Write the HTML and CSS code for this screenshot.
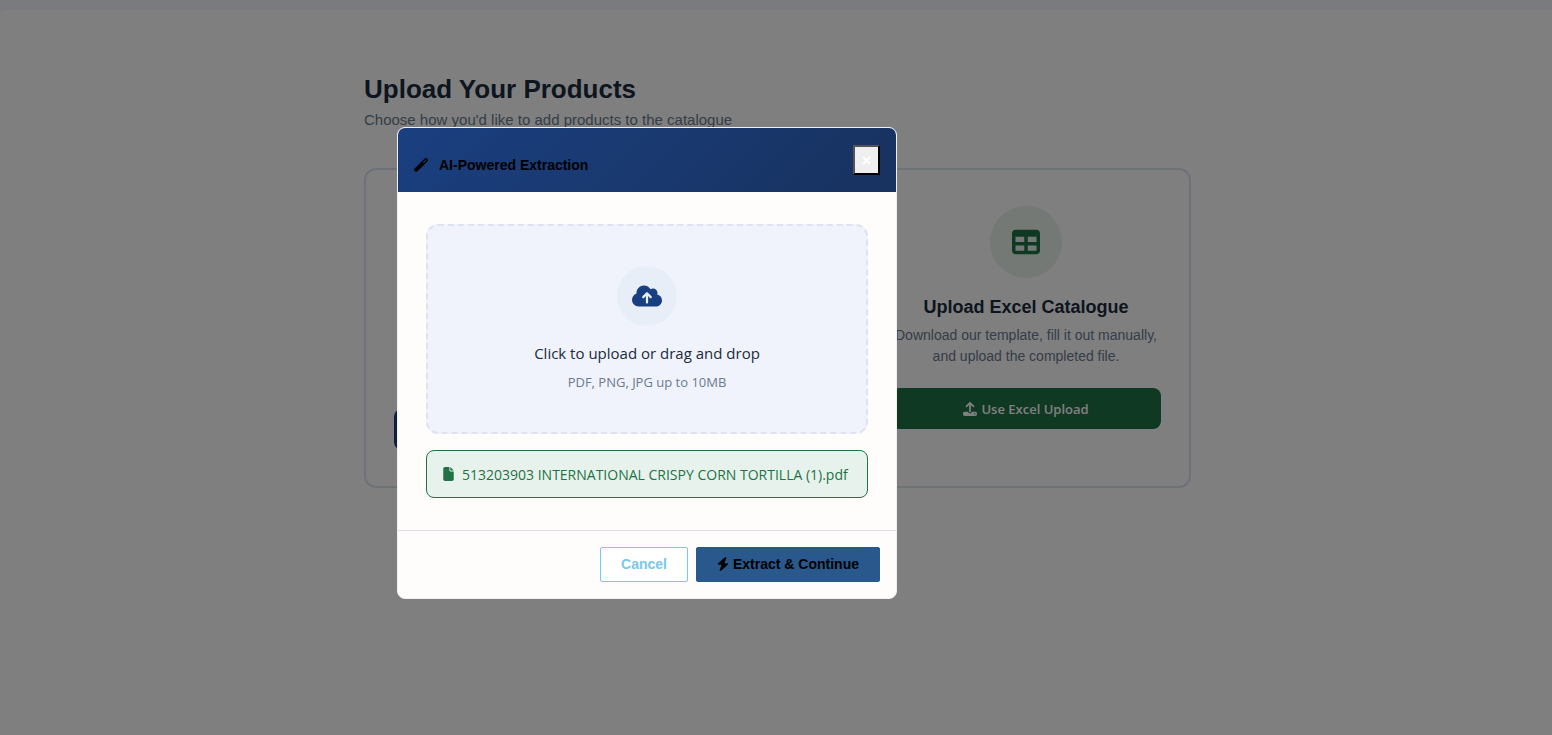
FILE: index.html
```html
<!DOCTYPE html>
<html lang="en">
<head>
  <meta charset="UTF-8">
  <meta name="viewport" content="width=device-width, initial-scale=1.0">
  <title>Upload Your Products</title>
  <link rel="stylesheet" href="styles.css">
</head>
<body>

<main class="page">
  <div class="container">
    <h1 class="page-title">Upload Your Products</h1>
    <p class="page-subtitle">Choose how you'd like to add products to the catalogue</p>

    <div class="cards">
      <section class="card">
        <div class="card-icon card-icon-blue">
          <svg width="28" height="28" viewBox="0 0 512 512" fill="currentColor"><path d="M14.1 463.3c-18.7-18.7-18.7-49.1 0-67.9L395.4 14.1c18.7-18.7 49.1-18.7 67.9 0l34.6 34.6c18.7 18.7 18.7 49.1 0 67.9L116.5 497.9c-18.7 18.7-49.1 18.7-67.9 0L14.1 463.3zM347.6 187.6l105-105L429.4 59.3l-105 105 23.3 23.3z"/></svg>
        </div>
        <button type="button" class="card-btn card-btn-blue" aria-label="AI-Powered Extraction"></button>
      </section>

      <section class="card">
        <div class="card-icon card-icon-green">
          <svg width="28" height="28" viewBox="0 0 512 512" fill="currentColor"><path d="M64 256V160H224v96H64zm0 64H224v96H64V320zm224 96V320H448v96H288zM448 256H288V160H448v96zM64 32C28.7 32 0 60.7 0 96V416c0 35.3 28.7 64 64 64H448c35.3 0 64-28.7 64-64V96c0-35.3-28.7-64-64-64H64z"/></svg>
        </div>
        <h2 class="card-title">Upload Excel Catalogue</h2>
        <p class="card-text">Download our template, fill it out manually, and upload the completed file.</p>
        <button type="button" class="card-btn card-btn-green">
          <svg width="14" height="14" viewBox="0 0 512 512" fill="currentColor"><path d="M288 109.3V352c0 17.7-14.3 32-32 32s-32-14.3-32-32V109.3l-73.4 73.4c-12.5 12.5-32.8 12.5-45.3 0s-12.5-32.8 0-45.3l128-128c12.5-12.5 32.8-12.5 45.3 0l128 128c12.5 12.5 12.5 32.8 0 45.3s-32.8 12.5-45.3 0L288 109.3zM64 352H192c0 35.3 28.7 64 64 64s64-28.7 64-64H448c35.3 0 64 28.7 64 64v32c0 35.3-28.7 64-64 64H64c-35.3 0-64-28.7-64-64V416c0-35.3 28.7-64 64-64zM432 456a24 24 0 1 0 0-48 24 24 0 1 0 0 48z"/></svg>
          Use Excel Upload
        </button>
      </section>
    </div>
  </div>
</main>

<div class="overlay">
  <div class="modal" role="dialog" aria-labelledby="modal-title">
    <div class="modal-header">
      <h5 class="modal-title" id="modal-title">
        <svg width="14" height="14" viewBox="0 0 512 512" fill="currentColor"><path d="M14.1 463.3c-18.7-18.7-18.7-49.1 0-67.9L395.4 14.1c18.7-18.7 49.1-18.7 67.9 0l34.6 34.6c18.7 18.7 18.7 49.1 0 67.9L116.5 497.9c-18.7 18.7-49.1 18.7-67.9 0L14.1 463.3zM347.6 187.6l105-105L429.4 59.3l-105 105 23.3 23.3z"/></svg>
        AI-Powered Extraction
      </h5>
      <button type="button" class="modal-close">×</button>
    </div>

    <div class="modal-body">
      <button type="button" class="dropzone">
        <span class="dropzone-icon">
          <svg width="30" height="24" viewBox="0 0 640 512" fill="currentColor"><path d="M144 480C64.5 480 0 415.5 0 336c0-62.8 40.2-116.2 96.2-135.9c-.1-2.7-.2-5.4-.2-8.1c0-88.4 71.6-160 160-160c59.3 0 111 32.2 138.7 80.2C409.9 102 428.3 96 448 96c53 0 96 43 96 96c0 12.2-2.3 23.8-6.4 34.6C596 238.4 640 290.1 640 352c0 70.7-57.3 128-128 128H144zm79-217c-9.4 9.4-9.4 24.6 0 33.9s24.6 9.4 33.9 0l39-39V392c0 13.3 10.7 24 24 24s24-10.7 24-24V257.9l39 39c9.4 9.4 24.6 9.4 33.9 0s9.4-24.6 0-33.9l-80-80c-9.4-9.4-24.6-9.4-33.9 0l-80 80z"/></svg>
        </span>
        <span class="dropzone-text">Click to upload or drag and drop</span>
        <span class="dropzone-hint">PDF, PNG, JPG up to 10MB</span>
      </button>

      <div class="file-row">
        <svg width="11" height="14" viewBox="0 0 384 512" fill="currentColor"><path d="M0 64C0 28.7 28.7 0 64 0H224V128c0 17.7 14.3 32 32 32H384V448c0 35.3-28.7 64-64 64H64c-35.3 0-64-28.7-64-64V64zm384 64H256V0L384 128z"/></svg>
        <span>513203903 INTERNATIONAL CRISPY CORN TORTILLA (1).pdf</span>
      </div>
    </div>

    <div class="modal-footer">
      <button type="button" class="btn btn-outline">Cancel</button>
      <button type="button" class="btn btn-primary">
        <svg width="12" height="14" viewBox="0 0 448 512" fill="currentColor"><path d="M349.4 44.6c5.9-13.7 1.5-29.7-10.6-38.5s-28.6-8-39.9 1.8l-256 224c-10 8.8-13.6 22.9-8.9 35.3S50.7 288 64 288H175.5L98.6 467.4c-5.9 13.7-1.5 29.7 10.6 38.5s28.6 8 39.9-1.8l256-224c10-8.8 13.6-22.9 8.9-35.3s-16.6-20.7-30-20.7H272.5L349.4 44.6z"/></svg>
        Extract &amp; Continue
      </button>
    </div>
  </div>
</div>

</body>
</html>
```

FILE: styles.css
```css
* {
  box-sizing: border-box;
}

body {
  margin: 0;
  padding-top: 10px;
  min-height: 100vh;
  display: flex;
  background: #f4f7fc;
  font-family: "Liberation Sans", Arial, sans-serif;
}

h1, h2, h5, p {
  margin: 0;
}

.page {
  flex: 1;
  padding: 64px 13px 64px 16px;
  background: #fff;
  border-top-left-radius: 6px;
}

.container {
  max-width: 827px;
  margin: 0 auto;
}

.page-title {
  margin-bottom: 6px;
  font-size: 26px;
  line-height: 30px;
  color: #1a2b3c;
}

.page-subtitle {
  margin-bottom: 38px;
  font-size: 15px;
  line-height: 20px;
  color: #6b7a90;
}

/* Option cards */
.cards {
  display: flex;
  justify-content: space-between;
  min-height: 320px;
}

.card {
  display: flex;
  flex-direction: column;
  justify-content: space-between;
  width: 330px;
  padding: 36px 28px;
  border: 2px solid #dde3f0;
  border-radius: 12px;
  text-align: center;
}

.card:last-child {
  justify-content: flex-start;
}

.card-icon {
  display: flex;
  align-items: center;
  justify-content: center;
  width: 72px;
  height: 72px;
  margin: 0 auto 20px;
  border-radius: 50%;
}

.card-icon-blue {
  background: #e8eef8;
  color: #1a3f80;
}

.card-icon-green {
  background: #e8f2ec;
  color: #217346;
}

.card-title {
  margin-bottom: 8px;
  font-size: 18px;
  line-height: 19px;
  color: #1a2b3c;
}

.card-text {
  margin-bottom: 21px;
  font-size: 14px;
  line-height: 21px;
  color: #6b7a90;
}

.card-btn {
  display: flex;
  align-items: center;
  justify-content: center;
  gap: 4px;
  width: 100%;
  height: 41px;
  border: none;
  border-radius: 8px;
  color: #fff;
  font-family: "Open Sans", sans-serif;
  font-size: 13px;
  font-weight: 600;
}

.card-btn-blue {
  background: #1a3f80;
}

.card-btn-green {
  background: #217346;
}

/* Modal */
.overlay {
  position: fixed;
  inset: 0;
  display: flex;
  align-items: center;
  justify-content: center;
  padding: 0 258px 9px 0;
  background: rgba(0, 0, 0, 0.5);
}

.modal {
  width: 500px;
  overflow: hidden;
  background: #fefdfc;
  border: 1px solid #f0f0f2;
  border-radius: 8px;
}

.modal-header {
  display: flex;
  align-items: flex-end;
  justify-content: space-between;
  padding: 17px 16px;
  background: linear-gradient(135deg, #1a3f80, #18325f);
}

.modal-title {
  display: flex;
  align-items: center;
  gap: 11px;
  font-size: 14px;
  line-height: 20px;
  color: #000;
}

.modal-close {
  width: 27px;
  height: 30px;
  padding: 2px 0 0;
  border: 2px outset #000;
  background: #efefef;
  color: #fff;
  font-family: "Liberation Sans", Arial, sans-serif;
  font-size: 16px;
  font-weight: bold;
}

.modal-body {
  padding: 32px 28px;
}

.dropzone {
  display: flex;
  flex-direction: column;
  align-items: center;
  width: 100%;
  padding: 40px 24px;
  border: 2px dashed #dde3f0;
  border-radius: 12px;
  background: #f0f3fb;
  font-family: "Open Sans", sans-serif;
}

.dropzone-icon {
  display: flex;
  align-items: center;
  justify-content: center;
  width: 60px;
  height: 60px;
  margin-bottom: 16px;
  border-radius: 50%;
  background: #e8eef8;
  color: #1a3f80;
}

.dropzone-text {
  margin-bottom: 8px;
  font-size: 15px;
  line-height: 22px;
  color: #1a2b3c;
}

.dropzone-hint {
  font-size: 13px;
  line-height: 20px;
  color: #6b7a90;
}

.file-row {
  display: flex;
  align-items: center;
  gap: 8px;
  height: 48px;
  margin-top: 16px;
  padding: 0 16px;
  border: 1px solid #217346;
  border-radius: 8px;
  background: #e8f2ec;
  color: #217346;
  font-family: "Open Sans", sans-serif;
  font-size: 14px;
}

.modal-footer {
  display: flex;
  justify-content: flex-end;
  gap: 8px;
  padding: 16px;
  border-top: 1px solid #dee0e8;
}

.btn {
  display: flex;
  align-items: center;
  gap: 4px;
  height: 35px;
  padding: 0 20px 2px;
  border: 1px solid #28588c;
  border-radius: 2px;
  font-family: "Liberation Sans", Arial, sans-serif;
  font-size: 14px;
  font-weight: bold;
}

.btn-outline {
  border-color: #78c8f0;
  background: #fff;
  color: #78c8f0;
}

.btn-primary {
  background: #28588c;
  color: #000;
}
```
